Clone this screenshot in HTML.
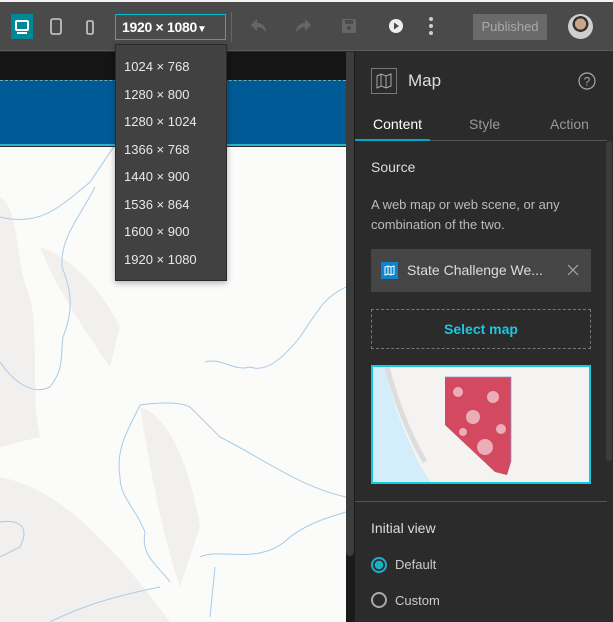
<!DOCTYPE html>
<html><head><style>
*{margin:0;padding:0;box-sizing:border-box}
body{width:613px;height:622px;overflow:hidden;background:#2b2b2b;font-family:"Liberation Sans",sans-serif;position:relative}
.a{position:absolute}
.t{color:#ddd;font-size:13px}
</style></head><body>
<div class="a" style="left:0;top:0;width:613px;height:2px;background:#f2f2f2"></div>
<div class="a" style="left:0;top:2px;width:613px;height:49px;background:#4a4a4a;border-bottom:1px solid #5c5c5c"></div>
<div class="a" style="left:11px;top:14px;width:22px;height:25px;background:#00879a"></div>
<svg class="a" style="left:11px;top:14px" width="22" height="25"><rect x="5" y="7" width="12" height="9" rx="1" fill="none" stroke="#fff" stroke-width="2"/><rect x="6" y="18" width="10" height="2" fill="#fff"/></svg>
<svg class="a" style="left:48px;top:17px" width="16" height="20"><rect x="3" y="2" width="10" height="15" rx="2" fill="none" stroke="#ccc" stroke-width="1.6"/></svg>
<svg class="a" style="left:84px;top:19px" width="12" height="18"><rect x="3" y="2" width="6" height="13" rx="1.5" fill="none" stroke="#ccc" stroke-width="1.6"/></svg>
<div class="a" style="left:115px;top:14px;width:111px;height:26px;border:1px solid #00bcd4;color:#fff;font-size:14px;line-height:24px;padding-left:6px;font-weight:bold;letter-spacing:-0.3px">1920 × 1080<span style="font-size:10px">▼</span></div>
<div class="a" style="left:231px;top:12px;width:1px;height:30px;background:#666"></div>
<svg class="a" style="left:247px;top:16px" width="22" height="20"><path d="M4 9 L10 3 V7 C16 7 19 11 19 17 C17 13 14 11 10 11 V15Z" fill="#666"/></svg>
<svg class="a" style="left:293px;top:16px" width="22" height="20"><path d="M18 9 L12 3 V7 C6 7 3 11 3 17 C5 13 8 11 12 11 V15Z" fill="#666"/></svg>
<svg class="a" style="left:340px;top:17px" width="18" height="18"><rect x="2" y="2" width="14" height="14" rx="2" fill="#666"/><rect x="5" y="3" width="8" height="4" fill="#4a4a4a"/><circle cx="9" cy="11" r="2" fill="#4a4a4a"/></svg>
<svg class="a" style="left:387px;top:17px" width="18" height="18"><circle cx="9" cy="9" r="7" fill="#eee"/><path d="M7 5.5 L12 9 L7 12.5Z" fill="#4a4a4a"/></svg>
<svg class="a" style="left:426px;top:16px" width="10" height="20"><circle cx="5" cy="3" r="2" fill="#ccc"/><circle cx="5" cy="10" r="2" fill="#ccc"/><circle cx="5" cy="17" r="2" fill="#ccc"/></svg>
<div class="a" style="left:473px;top:14px;width:74px;height:26px;background:#6a6a6a;color:#aaa;font-size:13px;line-height:26px;text-align:center">Published</div>
<div class="a" style="left:568px;top:14px;width:25px;height:25px;border-radius:50%;background:radial-gradient(circle at 50% 40%,#c9a590 0 28%,#3a302a 29% 40%,#cfcfcf 41%)"></div>
<div class="a" style="left:0;top:52px;width:346px;height:28px;background:#151515"></div>
<div class="a" style="left:0;top:80px;width:346px;height:66px;background:#005a96;border-top:1px dashed #7aa;border-bottom:2px solid #26b5d0"></div>
<div class="a" style="left:0;top:147px;width:346px;height:475px;background:#fbfbfa;overflow:hidden">
<svg width="346" height="475" style="position:absolute;left:0;top:0">
<g fill="#d8d4d0" opacity=".28">
<path d="M0 50 C20 60 15 120 30 150 C40 200 30 250 40 290 L0 300Z"/>
<path d="M40 100 C70 110 100 140 120 180 L110 220 C90 190 60 150 40 100Z"/>
<path d="M0 330 C50 340 100 380 170 475 L0 475Z"/>
<path d="M140 260 C170 270 190 320 200 380 L180 440 C160 380 150 320 140 260Z"/>
</g>
<g fill="none" stroke="#a9cbe8" stroke-width="1">
<path d="M0 70 C40 80 60 60 90 35 L115 -2"/>
<path d="M95 40 C80 70 60 90 62 120 C70 140 75 160 63 190 C60 210 65 220 50 240 C30 250 10 230 0 215"/>
<path d="M205 215 C220 210 235 225 250 220 C265 225 280 215 300 190 C320 160 325 150 346 140"/>
<path d="M120 330 C115 300 130 280 140 258 C160 255 180 255 190 260 C200 270 210 280 220 290 C260 310 300 340 346 350"/>
<path d="M120 330 C120 350 135 360 145 385 C140 410 160 420 170 435"/>
<path d="M0 375 C20 372 30 380 20 400 L0 410"/>
<path d="M200 410 C220 400 260 420 290 390 C310 375 330 370 346 365"/>
<path d="M50 475 C80 460 110 450 160 440 M210 470 L215 420"/>
</g>
</svg></div>
<div class="a" style="left:346px;top:52px;width:9px;height:570px;background:#1b1b1b"></div>
<div class="a" style="left:346px;top:52px;width:8px;height:504px;background:#3c3c3c;border-radius:0 0 4px 4px"></div>
<div class="a" style="left:115px;top:44px;width:112px;height:237px;background:#414141;border:1px solid #2a2a2a;box-shadow:0 2px 6px rgba(0,0,0,.3)"></div>
<div class="a t" style="left:124px;top:53px;line-height:27.5px;color:#e8e8e8">1024 × 768<br>1280 × 800<br>1280 × 1024<br>1366 × 768<br>1440 × 900<br>1536 × 864<br>1600 × 900<br>1920 × 1080</div>
<div class="a" style="left:355px;top:52px;width:258px;height:570px;background:#2b2b2b"></div>
<div class="a" style="left:371px;top:68px;width:26px;height:26px;border:1px solid #777"></div>
<svg class="a" style="left:371px;top:68px" width="26" height="26"><path d="M6 8 L10 6 L15 8 L20 6 V18 L15 20 L10 18 L6 20Z M10 6 V18 M15 8 V20" fill="none" stroke="#aaa" stroke-width="1"/></svg>
<div class="a" style="left:408px;top:71px;color:#ddd;font-size:17px">Map</div>
<svg class="a" style="left:577px;top:71px" width="20" height="20"><circle cx="10" cy="10" r="8" fill="none" stroke="#aaa" stroke-width="1.2"/><text x="10" y="14.5" font-size="12" fill="#aaa" text-anchor="middle" font-family="Liberation Sans">?</text></svg>
<div class="a" style="left:373px;top:116px;color:#fff;font-size:14px">Content</div>
<div class="a" style="left:469px;top:116px;color:#999;font-size:14px">Style</div>
<div class="a" style="left:550px;top:116px;color:#999;font-size:14px">Action</div>
<div class="a" style="left:355px;top:140px;width:252px;height:1px;background:#555"></div>
<div class="a" style="left:355px;top:139px;width:75px;height:2px;background:#00a9c6"></div>
<div class="a" style="left:606px;top:141px;width:6px;height:320px;background:#3c3c3c;border-radius:3px"></div>
<div class="a" style="left:371px;top:159px;color:#ddd;font-size:14px">Source</div>
<div class="a" style="left:371px;top:195px;color:#bbb;font-size:13px;line-height:20px">A web map or web scene, or any<br>combination of the two.</div>
<div class="a" style="left:371px;top:249px;width:220px;height:43px;background:#454545"></div>
<div class="a" style="left:381px;top:262px;width:17px;height:17px;background:#0a85d0"></div>
<svg class="a" style="left:381px;top:262px" width="17" height="17"><path d="M4 5 L7 4 L10 5 L13 4 V12 L10 13 L7 12 L4 13Z M7 4 V12 M10 5 V13" fill="none" stroke="#fff" stroke-width="1"/></svg>
<div class="a" style="left:407px;top:262px;color:#ddd;font-size:14px">State Challenge We...</div>
<svg class="a" style="left:566px;top:263px" width="14" height="14"><path d="M2 2 L12 12 M12 2 L2 12" stroke="#aaa" stroke-width="1.2"/></svg>
<div class="a" style="left:371px;top:309px;width:220px;height:40px;border:1px dashed #777;color:#1ec6e0;font-size:14px;font-weight:bold;text-align:center;line-height:38px">Select map</div>
<div class="a" style="left:371px;top:365px;width:220px;height:119px;border:2px solid #14c8e0;background:#fff;overflow:hidden">
<svg width="216" height="115">
<rect width="216" height="115" fill="#f4f3f2"/>
<path d="M0 0 H12 C18 30 28 60 48 100 L58 115 H0Z" fill="#d4edfa"/>
<path d="M14 0 C22 30 32 60 52 95" fill="none" stroke="#ddd" stroke-width="5"/>
<path d="M72 10 H138 V95 L134 108 L122 105 L72 58Z" fill="#c8102e" opacity=".75"/>
<g fill="#fff" opacity=".55"><circle cx="85" cy="25" r="5"/><circle cx="120" cy="30" r="6"/><circle cx="100" cy="50" r="7"/><circle cx="128" cy="62" r="5"/><circle cx="90" cy="65" r="4"/><circle cx="112" cy="80" r="8"/></g>
<path d="M72 10 H138 V95" fill="none" stroke="#8899dd" stroke-width=".8"/>
</svg></div>
<div class="a" style="left:355px;top:501px;width:252px;height:1px;background:#555"></div>
<div class="a" style="left:371px;top:520px;color:#ddd;font-size:14px">Initial view</div>
<div class="a" style="left:371px;top:557px;width:16px;height:16px;border-radius:50%;border:2px solid #1ab0c8;background:radial-gradient(circle,#1ab0c8 0 4px,#2b2b2b 4.5px)"></div>
<div class="a" style="left:395px;top:557px;color:#ccc;font-size:13px">Default</div>
<div class="a" style="left:371px;top:592px;width:16px;height:16px;border-radius:50%;border:2px solid #aaa"></div>
<div class="a" style="left:395px;top:593px;color:#ccc;font-size:13px">Custom</div>
</body></html>
